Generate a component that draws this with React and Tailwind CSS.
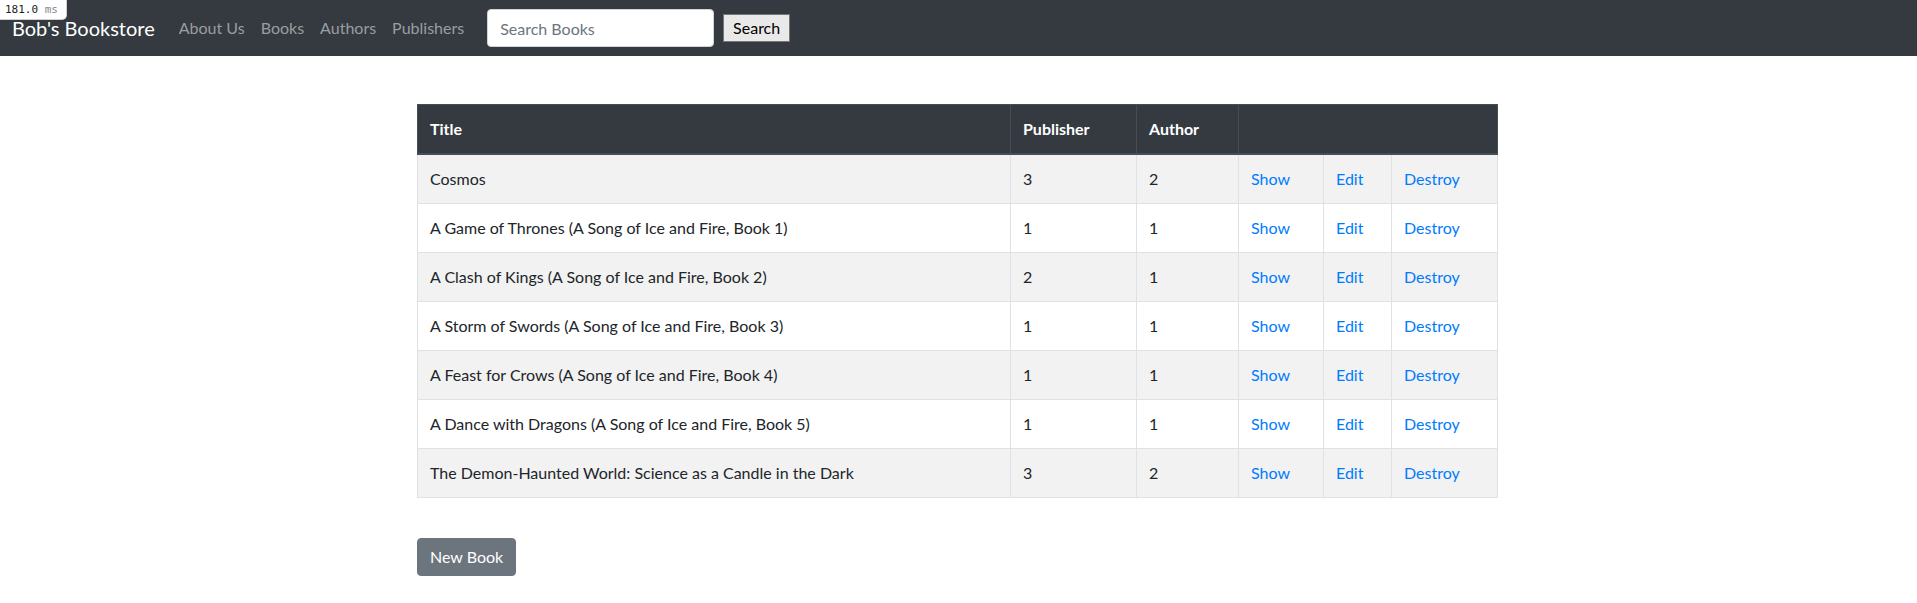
import React from "react";

const books = [
  { title: "Cosmos", publisher: 3, author: 2 },
  { title: "A Game of Thrones (A Song of Ice and Fire, Book 1)", publisher: 1, author: 1 },
  { title: "A Clash of Kings (A Song of Ice and Fire, Book 2)", publisher: 2, author: 1 },
  { title: "A Storm of Swords (A Song of Ice and Fire, Book 3)", publisher: 1, author: 1 },
  { title: "A Feast for Crows (A Song of Ice and Fire, Book 4)", publisher: 1, author: 1 },
  { title: "A Dance with Dragons (A Song of Ice and Fire, Book 5)", publisher: 1, author: 1 },
  { title: "The Demon-Haunted World: Science as a Candle in the Dark", publisher: 3, author: 2 },
];

export default function App() {
  return (
    <div className="min-h-screen bg-white text-[#212529] text-base leading-6 font-['Lato',sans-serif] relative">
      {/* timing badge */}
      <div className="absolute left-0 top-0 z-10 h-[20px] w-[67px] bg-white border-r border-b border-[#d0d0d0] rounded-br-[5px] pl-[5px] font-['DejaVu_Sans_Mono',monospace] text-[11px] leading-[19px] text-[#222]">
        181.0 <span className="text-[#888]">ms</span>
      </div>

      {/* ══ NAVBAR ══ */}
      <nav className="h-[56px] bg-[#343a40] pl-3 pr-4 flex items-center">
        <a href="#" className="text-white text-[20px] leading-[30px] mr-4">
          Bob's Bookstore
        </a>
        <ul className="flex items-center">
          {["About Us", "Books", "Authors", "Publishers"].map((l) => (
            <li key={l}>
              <a href="#" className="block px-2 py-2 text-[#9a9da0]">
                {l}
              </a>
            </li>
          ))}
        </ul>
        <form className="flex items-center ml-[15px]">
          <input
            type="text"
            placeholder="Search Books"
            className="w-[227px] h-[38px] bg-white border border-[#ced4da] rounded px-3 text-base text-[#495057] placeholder:text-[#6c757d] outline-none"
          />
          <button
            type="button"
            className="ml-[9px] h-[28px] w-[67px] bg-[#e9e9e9] border border-[#767676] text-black text-base font-normal leading-5"
          >
            Search
          </button>
        </form>
      </nav>

      {/* ══ BOOK TABLE ══ */}
      <div className="w-[1083px] mx-auto mt-12">
        <table className="w-[1080px] table-fixed border-collapse mb-4">
          <colgroup>
            <col className="w-[593px]" />
            <col className="w-[126px]" />
            <col className="w-[102px]" />
            <col className="w-[85px]" />
            <col className="w-[68px]" />
            <col className="w-[106px]" />
          </colgroup>
          <thead>
            <tr className="bg-[#343a40] text-white">
              <th className="text-left font-bold p-3 border border-[#454d55] border-b-2">Title</th>
              <th className="text-left font-bold p-3 border border-[#454d55] border-b-2">Publisher</th>
              <th className="text-left font-bold p-3 border border-[#454d55] border-b-2">Author</th>
              <th colSpan={3} className="p-3 border border-[#454d55] border-b-2"></th>
            </tr>
          </thead>
          <tbody>
            {books.map((b, i) => (
              <tr key={b.title} className={i % 2 === 0 ? "bg-[#f2f2f2]" : "bg-white"}>
                <td className="p-3 border border-[#dee2e6]">{b.title}</td>
                <td className="p-3 border border-[#dee2e6]">{b.publisher}</td>
                <td className="p-3 border border-[#dee2e6]">{b.author}</td>
                <td className="p-3 border border-[#dee2e6]">
                  <a href="#" className="text-[#007bff]">Show</a>
                </td>
                <td className="p-3 border border-[#dee2e6]">
                  <a href="#" className="text-[#007bff]">Edit</a>
                </td>
                <td className="p-3 border border-[#dee2e6]">
                  <a href="#" className="text-[#007bff]">Destroy</a>
                </td>
              </tr>
            ))}
          </tbody>
        </table>

        <div className="pt-[24px]">
          <a
            href="#"
            className="inline-block bg-[#6c757d] text-white px-3 py-[6px] border border-[#6c757d] rounded"
          >
            New Book
          </a>
        </div>
      </div>
    </div>
  );
}
